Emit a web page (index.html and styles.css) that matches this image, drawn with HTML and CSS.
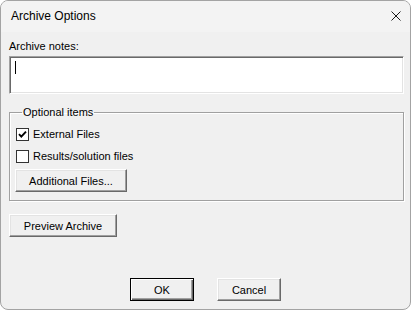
FILE: index.html
```html
<!DOCTYPE html>
<html lang="en">
<head>
    <meta charset="UTF-8">
    <title>Archive Options</title>
    <link rel="stylesheet" href="styles.css">
</head>
<body>
    <div class="window">
        <div class="titlebar">
            <span class="title">Archive Options</span>
            <svg class="close" width="10" height="10" viewBox="0 0 10 10">
                <path d="M0.5 0.5 L9.5 9.5 M9.5 0.5 L0.5 9.5" stroke="#1a1a1a" stroke-width="1" fill="none"/>
            </svg>
        </div>
        <div class="dialog">
            <div class="label">Archive notes:</div>
            <div class="notes"><span class="caret"></span></div>

            <fieldset class="group">
                <legend>Optional items</legend>
                <div class="check-row">
                    <span class="checkbox">
                        <svg width="11" height="11" viewBox="0 0 11 11">
                            <path d="M2 5.2 L4.3 7.6 L9 2.6" stroke="#000" stroke-width="1.9" fill="none"/>
                        </svg>
                    </span>
                    <span>External Files</span>
                </div>
                <div class="check-row">
                    <span class="checkbox"></span>
                    <span>Results/solution files</span>
                </div>
                <button class="button additional">Additional Files...</button>
            </fieldset>

            <button class="button preview">Preview Archive</button>

            <div class="footer">
                <button class="button small default">OK</button>
                <button class="button small">Cancel</button>
            </div>
        </div>
    </div>
</body>
</html>
```

FILE: styles.css
```css
body {
    margin: 0;
    background-color: #ffffff;
    font-family: 'Liberation Sans', Arial, sans-serif;
    font-size: 11px;
    color: #000000;
}

.window {
    width: 411px;
    height: 310px;
    box-sizing: border-box;
    border: 1px solid #a3a3a3;
    border-radius: 8px;
    background-color: #f0f0f0;
    display: flex;
    flex-direction: column;
    overflow: hidden;
}

.titlebar {
    height: 31px;
    flex-shrink: 0;
    background-color: #f3f3f3;
    display: flex;
    align-items: center;
    justify-content: space-between;
    padding: 0 9px 0 10px;
    font-size: 12px;
}

.title {
    margin-top: -1px;
}

.close {
    margin-top: -2px;
}

.dialog {
    flex: 1;
    display: flex;
    flex-direction: column;
    padding: 0 6px 8px 8px;
}

.label {
    margin-top: 6px;
    line-height: 16px;
}

.notes {
    margin-top: 2px;
    height: 38px;
    box-sizing: border-box;
    background-color: #ffffff;
    border-top: 1px solid #a0a0a0;
    border-left: 1px solid #a0a0a0;
    border-right: 1px solid #ffffff;
    border-bottom: 1px solid #ffffff;
    box-shadow: inset 1px 1px 0 #696969, inset -1px -1px 0 #e3e3e3;
    padding: 4px 5px;
}

.caret {
    display: block;
    width: 1px;
    height: 13px;
    background-color: #000000;
}

.group {
    margin: 10px 0 0 0;
    padding: 4px 8px 8px 6px;
    border: 1px solid #a0a0a0;
    box-shadow: 1px 1px 0 #ffffff, inset 1px 1px 0 #ffffff;
    min-width: 0;
}

.group legend {
    padding: 0 1px;
    margin-left: 6px;
    line-height: 16px;
}

.check-row {
    display: flex;
    align-items: center;
    height: 16px;
    margin-top: 6px;
}

.check-row:first-of-type {
    margin-top: 2px;
}

.checkbox {
    width: 13px;
    height: 13px;
    box-sizing: border-box;
    border: 1px solid #333333;
    background-color: #ffffff;
    margin-right: 4px;
    display: flex;
    align-items: center;
    justify-content: center;
}

.button {
    font-family: 'Liberation Sans', Arial, sans-serif;
    font-size: 11px;
    color: #000000;
    height: 23px;
    box-sizing: border-box;
    background-color: #f0f0f0;
    border-top: 1px solid #ffffff;
    border-left: 1px solid #ffffff;
    border-right: 1px solid #696969;
    border-bottom: 1px solid #696969;
    box-shadow: inset -1px -1px 0 #a0a0a0, inset 1px 1px 0 #e3e3e3;
    padding: 0;
    border-radius: 0;
}

.additional {
    display: block;
    width: 112px;
    margin: 5px 0 0 -1px;
}

.preview {
    width: 108px;
    margin-top: 13px;
    align-self: flex-start;
}

.footer {
    margin-top: auto;
    display: flex;
    gap: 23px;
    padding-left: 121px;
}

.small {
    width: 64px;
}

.default {
    border: 1px solid #000000;
    box-shadow: inset 1px 1px 0 #ffffff, inset -1px -1px 0 #696969, inset -2px -2px 0 #a0a0a0;
}
```
